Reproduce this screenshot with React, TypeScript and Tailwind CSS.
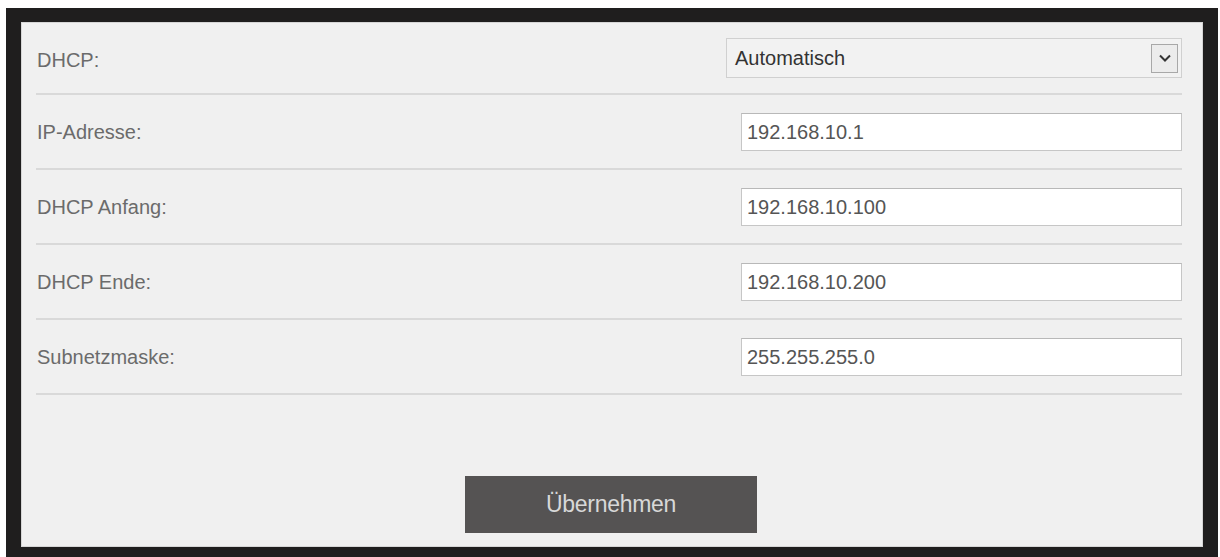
const fields = [
  { label: "IP-Adresse:", value: "192.168.10.1" },
  { label: "DHCP Anfang:", value: "192.168.10.100" },
  { label: "DHCP Ende:", value: "192.168.10.200" },
  { label: "Subnetzmaske:", value: "255.255.255.0" },
];

const ChevronBox = () => (
  <div className="w-[27px] h-[29px] border border-[#a8a8a8] bg-[#ececec] flex items-center justify-center">
    <svg width="14" height="10" viewBox="0 0 14 10" fill="none">
      <path d="M2 2.5 7 7.5 12 2.5" stroke="#333" strokeWidth="2" />
    </svg>
  </div>
);

const App = () => {
  return (
    <div
      className="h-[557px] overflow-hidden bg-white pt-[8px] pl-[6px]"
      style={{ fontFamily: '"Liberation Sans", Arial, sans-serif' }}
    >
      <div className="w-[1212px] border-[15px] border-t-[14px] border-[#1f1e1e] bg-[#f0f0f0]">
        <div className="h-[525px] flex flex-col pl-[14px] pr-[20px] border border-[#d6d6d6]">
          <div className="h-[72px] flex items-center justify-between border-b-2 border-[#d9d9d9]">
            <span className="text-[20px] text-[#6b6b6b] pl-px pt-[4px]">
              DHCP:
            </span>
            <div className="w-[456px] h-[40px] border border-[#d0d0d0] bg-[#f2f2f2] flex items-center justify-between pl-[8px] pr-[3px]">
              <span className="text-[20px] text-[#333]">Automatisch</span>
              <ChevronBox />
            </div>
          </div>

          {fields.map((f) => (
            <div
              key={f.label}
              className="h-[75px] flex items-center justify-between border-b-2 border-[#d9d9d9]"
            >
              <span className="text-[20px] text-[#6b6b6b] pl-px">
                {f.label}
              </span>
              <div className="w-[441px] h-[38px] border border-[#c6c6c6] border-t-[#b8b8b8] bg-white flex items-center pl-[5px]">
                <span className="text-[20px] text-[#555]">{f.value}</span>
              </div>
            </div>
          ))}

          <div className="flex justify-center mt-[81px]">
            <button className="w-[292px] h-[57px] bg-[#555353] text-[#d8d8d8] text-[23px] tracking-[-0.3px] ml-[4px]">
              Übernehmen
            </button>
          </div>
        </div>
      </div>
    </div>
  );
};

export default App;
